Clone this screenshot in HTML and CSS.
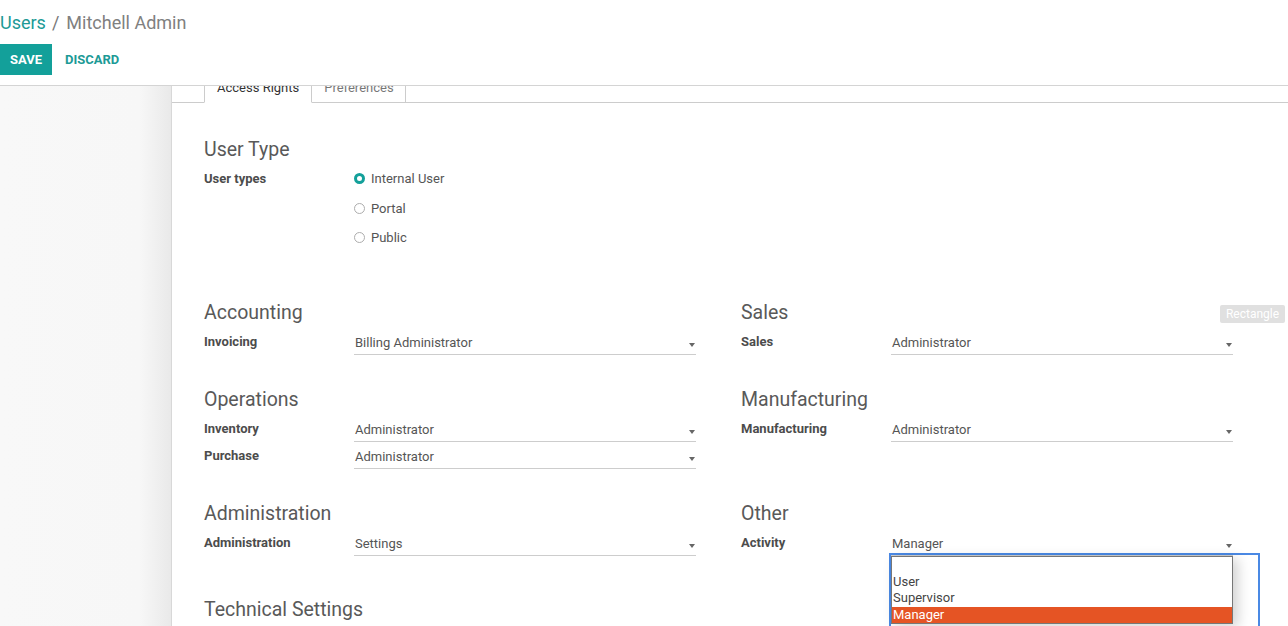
FILE: index.html
```html
<!DOCTYPE html>
<html>
<head>
<meta charset="utf-8">
<link rel="stylesheet" href="styles.css">
</head>
<body>
<header class="cp">
  <div class="bc"><span class="bc-link">Users</span><span class="bc-sep">/</span><span class="bc-cur">Mitchell Admin</span></div>
  <div class="btns"><button class="btn btn-save">Save</button><button class="btn btn-discard">Discard</button></div>
</header>
<div class="main">
  <div class="aside"></div>
  <div class="sheet">
    <div class="scroll">
      <ul class="tabs">
        <li class="tab active">Access Rights</li>
        <li class="tab">Preferences</li>
      </ul>
      <div class="content">
        <h2 class="sep first">User Type</h2>
        <div class="row usertype">
          <div class="lbl">User types</div>
          <div class="radios">
            <div class="radio"><span class="dot checked"></span>Internal User</div>
            <div class="radio"><span class="dot"></span>Portal</div>
            <div class="radio"><span class="dot"></span>Public</div>
          </div>
        </div>
        <div class="groups">
          <section class="grp">
            <h2 class="sep">Accounting</h2>
            <div class="row"><div class="lbl">Invoicing</div><div class="sel"><span class="val">Billing Administrator</span><span class="caret"></span></div></div>
          </section>
          <section class="grp">
            <h2 class="sep">Sales</h2>
            <div class="row"><div class="lbl">Sales</div><div class="sel"><span class="val">Administrator</span><span class="caret"></span></div></div>
          </section>
          <section class="grp">
            <h2 class="sep">Operations</h2>
            <div class="row"><div class="lbl">Inventory</div><div class="sel"><span class="val">Administrator</span><span class="caret"></span></div></div>
            <div class="row"><div class="lbl">Purchase</div><div class="sel"><span class="val">Administrator</span><span class="caret"></span></div></div>
          </section>
          <section class="grp">
            <h2 class="sep">Manufacturing</h2>
            <div class="row"><div class="lbl">Manufacturing</div><div class="sel"><span class="val">Administrator</span><span class="caret"></span></div></div>
          </section>
          <section class="grp">
            <h2 class="sep">Administration</h2>
            <div class="row"><div class="lbl">Administration</div><div class="sel"><span class="val">Settings</span><span class="caret"></span></div></div>
          </section>
          <section class="grp">
            <h2 class="sep">Other</h2>
            <div class="row"><div class="lbl">Activity</div><div class="sel"><span class="val">Manager</span><span class="caret"></span></div></div>
          </section>
        </div>
        <h2 class="sep tech">Technical Settings</h2>
      </div>
    </div>
  </div>
</div>
<div class="popup">
  <ul class="listbox">
    <li class="opt">&nbsp;</li>
    <li class="opt">User</li>
    <li class="opt">Supervisor</li>
    <li class="opt hl">Manager</li>
  </ul>
</div>
<div class="tooltip">Rectangle</div>
</body>
</html>
```
FILE: styles.css
```css
* { box-sizing: border-box; }
html, body { margin: 0; padding: 0; }
body {
  width: 1288px;
  height: 626px;
  overflow: hidden;
  font-family: Roboto, "Liberation Sans", sans-serif;
  font-size: 13px;
  color: #4c4c4c;
  background: #fff;
  position: relative;
}
.cp {
  height: 86px;
  padding-top: 11px;
  border-bottom: 1px solid #d4d4d4;
  background: #fff;
}
.bc {
  font-size: 18px;
  line-height: 24px;
  height: 24px;
  white-space: nowrap;
}
.bc-link { color: #1c9a96; }
.bc-sep { color: #777; margin: 0 7px 0 6px; }
.bc-cur { color: #808080; }
.btns {
  margin-top: 9px;
  display: flex;
  gap: 3px;
}
.btn {
  font-family: Roboto, "Liberation Sans", sans-serif;
  font-size: 13px;
  font-weight: bold;
  text-transform: uppercase;
  height: 31px;
  line-height: 31px;
  padding: 0 10px;
  border: 0;
  border-radius: 0;
  background: transparent;
}
.btn-save { background: #13a09a; color: #fff; }
.btn-discard { color: #1c9a96; }

.main {
  display: flex;
  height: 540px;
  overflow: hidden;
}
.aside {
  width: 172px;
  flex: none;
  background: linear-gradient(to right, #f8f8f8 0, #f7f7f7 140px, #e9e9e9 171px);
  border-right: 1px solid #d8d8d8;
}
.sheet {
  flex: 1;
  overflow: hidden;
  background: #fff;
}
.scroll {
  margin-top: -20px;
}
.tabs {
  list-style: none;
  margin: 0;
  padding: 0 0 0 32px;
  display: flex;
  height: 37px;
  border-bottom: 1px solid #ccc;
}
.tab {
  height: 37px;
  margin-bottom: -1px;
  padding: 11px 11px 0 12px;
  line-height: 20px;
  border: 1px solid #ccc;
  border-left: 0;
  color: #777;
  background: #fff;
}
.tab.active {
  padding-right: 12px;
  border-left: 1px solid #ccc;
  border-bottom-color: #fff;
  color: #333;
}
.content {
  padding-left: 32px;
}
.sep {
  margin: 0;
  padding-top: 1px;
  font-size: 19.5px;
  line-height: 24px;
  font-weight: normal;
  color: #595959;
}
.sep.first { margin-top: 34px; }
.row {
  display: grid;
  grid-template-columns: 150px 342px;
  height: 27px;
}
.lbl {
  font-weight: bold;
  line-height: 20px;
  padding-top: 4px;
  color: #4c4c4c;
  white-space: nowrap;
}
.usertype {
  height: auto;
  margin-top: 2px;
}
.usertype .lbl { padding-top: 5px; }
.radio {
  display: flex;
  align-items: center;
  height: 29.5px;
  line-height: 20px;
  color: #555;
}
.radio:nth-child(2) { padding-top: 1px; }
.dot {
  width: 11px;
  height: 11px;
  border-radius: 50%;
  border: 1px solid #adadad;
  margin-right: 6px;
  background: #fff;
}
.dot.checked {
  border: 3px solid #13a09a;
  background: #fff;
}
.groups {
  margin-top: 47px;
  display: grid;
  grid-template-columns: 492px 492px;
  column-gap: 45px;
  row-gap: 32px;
  align-items: start;
}
.grp .sep { margin-bottom: 3px; }
.sel {
  display: flex;
  align-items: center;
  height: 27px;
  padding: 5px 0 1px 1px;
  border-bottom: 1px solid #cdcdcd;
  color: #555;
  line-height: 20px;
}
.val { flex: 1; white-space: nowrap; }
.caret {
  width: 0;
  height: 0;
  border-top: 4px solid #666;
  border-left: 3px solid transparent;
  border-right: 3px solid transparent;
  margin: 4px 1px 0 0;
}
.sep.tech { margin-top: 41px; }

.popup {
  position: absolute;
  left: 889px;
  top: 553px;
  width: 371px;
  height: 90px;
  border: 2px solid #4a89e4;
  padding-top: 1px;
}
.listbox {
  list-style: none;
  margin: 0;
  padding: 0;
  width: 342px;
  border: 1px solid #777;
  background: #fff;
  box-shadow: 5px 3px 12px rgba(0,0,0,0.18);
}
.opt {
  height: 16.5px;
  line-height: 16.5px;
  padding-left: 1px;
  font-size: 13px;
  color: #444;
}
.opt.hl {
  background: #e55424;
  color: #fff;
}
.tooltip {
  position: absolute;
  left: 1220px;
  top: 305px;
  width: 65px;
  height: 18px;
  line-height: 18px;
  background: #e0e0e0;
  color: #fff;
  font-size: 12px;
  text-align: center;
  border-radius: 2px;
}
```
